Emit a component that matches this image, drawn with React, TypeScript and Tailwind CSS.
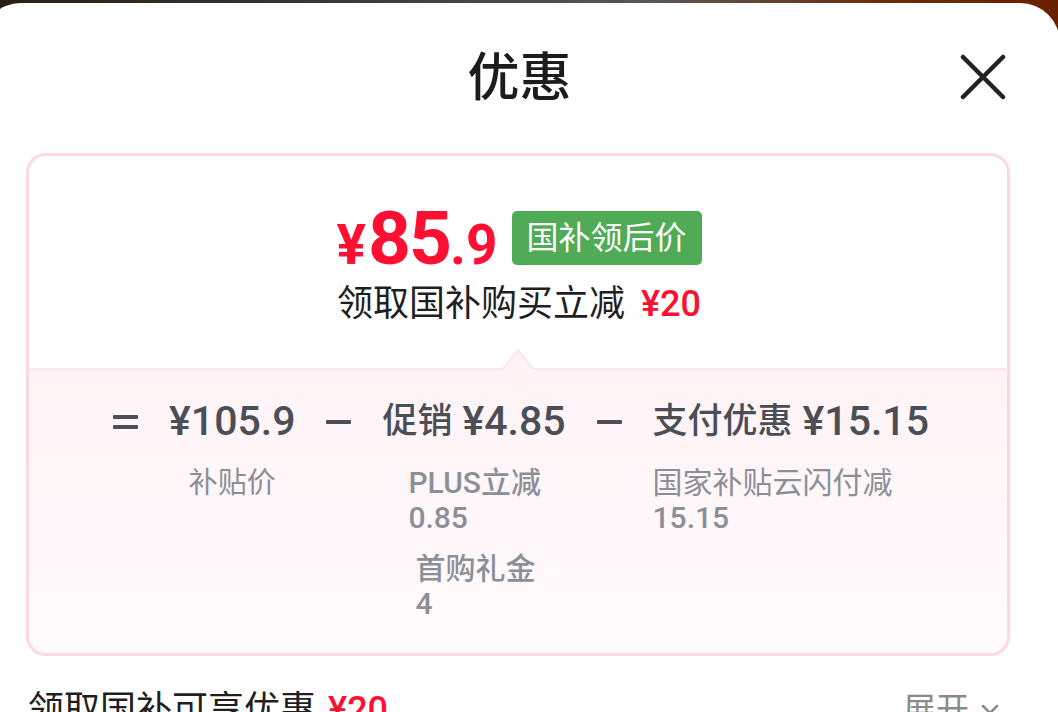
import React from 'react';

const sans = '[font-family:Roboto,"Noto_Sans_CJK_SC",sans-serif]';

const Op = ({ children }: { children: React.ReactNode }) => (
  <div className="h-[48px] w-[25px] flex items-center justify-center">
    <span className="block">{children}</span>
  </div>
);

const Minus = () => (
  <Op>
    <div className="w-[25px] h-[4px] bg-[#4b4e56] rounded-[1px]" />
  </Op>
);

const Equals = () => (
  <Op>
    <div className="flex flex-col gap-[6px]">
      <div className="w-[25px] h-[4px] bg-[#4b4e56] rounded-[1px]" />
      <div className="w-[25px] h-[4px] bg-[#4b4e56] rounded-[1px]" />
    </div>
  </Op>
);

export default function App() {
  return (
    <div
      className={`w-[1058px] h-[712px] overflow-hidden bg-[linear-gradient(90deg,#2a1f18_0%,#3a3633_30%,#5b5856_62%,#6e2a0c_84%,#6a1f00_100%)] ${sans}`}
    >
      <div className="ml-[-19px] mt-[3px] w-[1079px] h-[709px] bg-white rounded-t-[40px]">
        {/* Header */}
        <div className="relative h-[150px] flex justify-center pt-[45px]">
          <h1 className="text-[52px] leading-[62px] text-[#1c1c1c] font-medium ml-[-2px]">优惠</h1>
          <button className="absolute left-[978px] top-[50px] w-[48px] h-[48px] flex items-center justify-center">
            <svg width="46" height="46" viewBox="0 0 46 46" fill="none">
              <path d="M3 3 L43 43 M43 3 L3 43" stroke="#222" strokeWidth="4.5" strokeLinecap="round" />
            </svg>
          </button>
        </div>

        {/* Card */}
        <div className="ml-[45px] w-[984px] h-[503px] border-[3px] border-[#ffd7e1] rounded-[20px] overflow-hidden flex flex-col">
          <div className="h-[212px] flex flex-col items-center pt-[54px] bg-white">
            <div className="h-[56px] flex items-center gap-[14px] ml-[2px]">
              <div className="flex items-baseline text-[#ff1032] font-bold leading-none">
                <span className="text-[55px]">¥</span>
                <span className="text-[75px] tracking-[-2px] ml-[2px]">85</span>
                <span className="text-[55px]">.9</span>
              </div>
              <div className="h-[54px] px-[15px] bg-[#4fab56] rounded-[5px] flex items-center text-white text-[32px] leading-none">
                国补领后价
              </div>
            </div>
            <div className="mt-[18px] h-[40px] flex items-center text-[36px] leading-[40px] text-[#1f1f1f] ml-[2px]">
              <span>领取国补购买立减</span>
              <span className="ml-[16px] text-[#ff1032] font-medium text-[36px]">¥20</span>
            </div>
          </div>

          <div className="relative flex-1 border-t-[2px] border-[#ffe4eb] bg-gradient-to-b from-[#fff3f6] to-[#fffbfc]">
            <svg
              className="absolute left-1/2 -translate-x-1/2 top-[-22px]"
              width="34"
              height="22"
              viewBox="0 0 34 22"
            >
              <path d="M1 22 L17 2 L33 22 Z" fill="#fff3f6" />
              <path d="M1 22 L17 2 L33 22" fill="none" stroke="#ffe4eb" strokeWidth="2" />
            </svg>

            <div className="flex justify-center items-start gap-[31px] pt-[28px] ml-[6px] text-[#4b4e56]">
              <Equals />
              <div className="flex flex-col items-center">
                <div className="h-[48px] flex items-center text-[41px] font-medium">¥105.9</div>
                <div className="mt-[19px] text-[29px] leading-[36px] text-[#8c8f98]">补贴价</div>
              </div>
              <Minus />
              <div className="flex flex-col">
                <div className="h-[48px] flex items-center font-medium">
                  <span className="text-[35px]">促销</span>
                  <span className="ml-[10px] text-[41px]">¥4.85</span>
                </div>
                <div className="mt-[19px] pl-[26px] text-[30px] leading-[35px] text-[#8c8f98] font-medium">
                  <div>PLUS立减</div>
                  <div>0.85</div>
                  <div className="mt-[16px] pl-[7px]">首购礼金</div>
                  <div className="pl-[7px]">4</div>
                </div>
              </div>
              <Minus />
              <div className="flex flex-col">
                <div className="h-[48px] flex items-center font-medium">
                  <span className="text-[35px]">支付优惠</span>
                  <span className="ml-[10px] text-[41px]">¥15.15</span>
                </div>
                <div className="mt-[19px] text-[30px] leading-[35px] text-[#8c8f98]">
                  <div>国家补贴云闪付减</div>
                  <div className="font-medium">15.15</div>
                </div>
              </div>
            </div>
          </div>
        </div>

        {/* Footer row */}
        <div className="ml-[47px] w-[985px] mt-[34px] flex items-center justify-between">
          <div className="flex items-center text-[36px] leading-[40px] text-[#1f1f1f]">
            <span>领取国补可享优惠</span>
            <span className="ml-[12px] text-[#ff1032] font-medium text-[36px]">¥20</span>
          </div>
          <div className="flex items-center text-[33px] leading-[40px] text-[#8a8a8a] mr-[14px]">
            <span>展开</span>
            <svg className="ml-[12px]" width="18" height="12" viewBox="0 0 18 12" fill="none">
              <path d="M2 2 L9 9 L16 2" stroke="#8a8a8a" strokeWidth="2.5" strokeLinecap="round" />
            </svg>
          </div>
        </div>
      </div>
    </div>
  );
}
